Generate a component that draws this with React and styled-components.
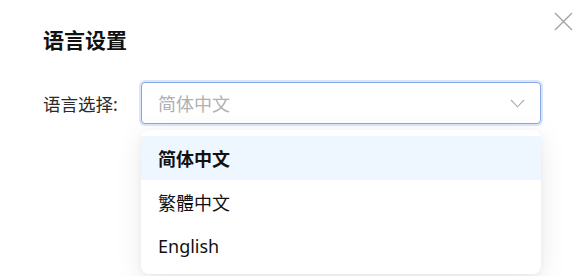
import React from "react";
import styled, { createGlobalStyle } from "styled-components";

const GlobalStyle = createGlobalStyle`
  html, body {
    margin: 0;
    padding: 0;
    background: #fff;
  }
  body {
    font-family: "Noto Sans", "Noto Sans CJK SC", sans-serif;
    color: #1f1f1f;
  }
`;

const Dialog = styled.div`
  position: relative;
  width: 584px;
  height: 276px;
  box-sizing: border-box;
  padding: 25px 43px 0 43px;
  overflow: hidden;
`;

const Title = styled.h2`
  margin: 0;
  font-size: 21px;
  line-height: 30px;
  font-weight: 700;
  color: #111;
`;

const CloseButton = styled.button`
  position: absolute;
  top: 11px;
  right: 10px;
  width: 21px;
  height: 21px;
  padding: 0;
  border: none;
  background: none;
  display: flex;
  align-items: center;
  justify-content: center;
  cursor: pointer;
`;

const FormRow = styled.div`
  display: flex;
  align-items: center;
  margin-top: 27px;
`;

const Label = styled.label`
  width: 98px;
  font-size: 17.5px;
  color: #2a2a2a;
`;

const SelectWrap = styled.div`
  position: relative;
  width: 400px;
`;

const SelectBox = styled.div`
  height: 42px;
  box-sizing: border-box;
  border: 1px solid #86a9e6;
  border-radius: 4px;
  box-shadow: 0 0 0 2px #dbe6fb;
  padding: 0 15px 0 16px;
  display: flex;
  align-items: center;
  justify-content: space-between;
  background: #fff;
`;

const Placeholder = styled.span`
  font-size: 18px;
  color: #b0b0b0;
`;

const Menu = styled.ul`
  position: absolute;
  top: calc(100% + 6px);
  left: 0;
  right: 0;
  margin: 0;
  padding: 6px 0;
  list-style: none;
  background: #fff;
  border-radius: 8px;
  box-shadow: 0 6px 28px rgba(0, 0, 0, 0.09), 0 2px 6px rgba(0, 0, 0, 0.04);
`;

const Option = styled.li`
  height: 44px;
  display: flex;
  align-items: center;
  padding-left: 17px;
  font-size: 18px;
  color: #111;
  font-weight: ${p => (p.selected ? 700 : 400)};
  background: ${p => (p.selected ? "#eef6ff" : "transparent")};
`;

const options = ["简体中文", "繁體中文", "English"];

export default function App() {
  return (
    <>
      <GlobalStyle />
      <Dialog>
        <Title>语言设置</Title>
        <CloseButton aria-label="close">
          <svg width="19" height="19" viewBox="0 0 19 19">
            <path d="M1 1L18 18M18 1L1 18" stroke="#a3a3a3" strokeWidth="1.4" fill="none" />
          </svg>
        </CloseButton>
        <FormRow>
          <Label>语言选择:</Label>
          <SelectWrap>
            <SelectBox>
              <Placeholder>简体中文</Placeholder>
              <svg width="15" height="9" viewBox="0 0 15 9">
                <path d="M1 1L7.5 7.8L14 1" stroke="#aaaaaa" strokeWidth="1.1" fill="none" />
              </svg>
            </SelectBox>
            <Menu>
              {options.map((o, i) => (
                <Option key={o} selected={i === 0}>{o}</Option>
              ))}
            </Menu>
          </SelectWrap>
        </FormRow>
      </Dialog>
    </>
  );
}
